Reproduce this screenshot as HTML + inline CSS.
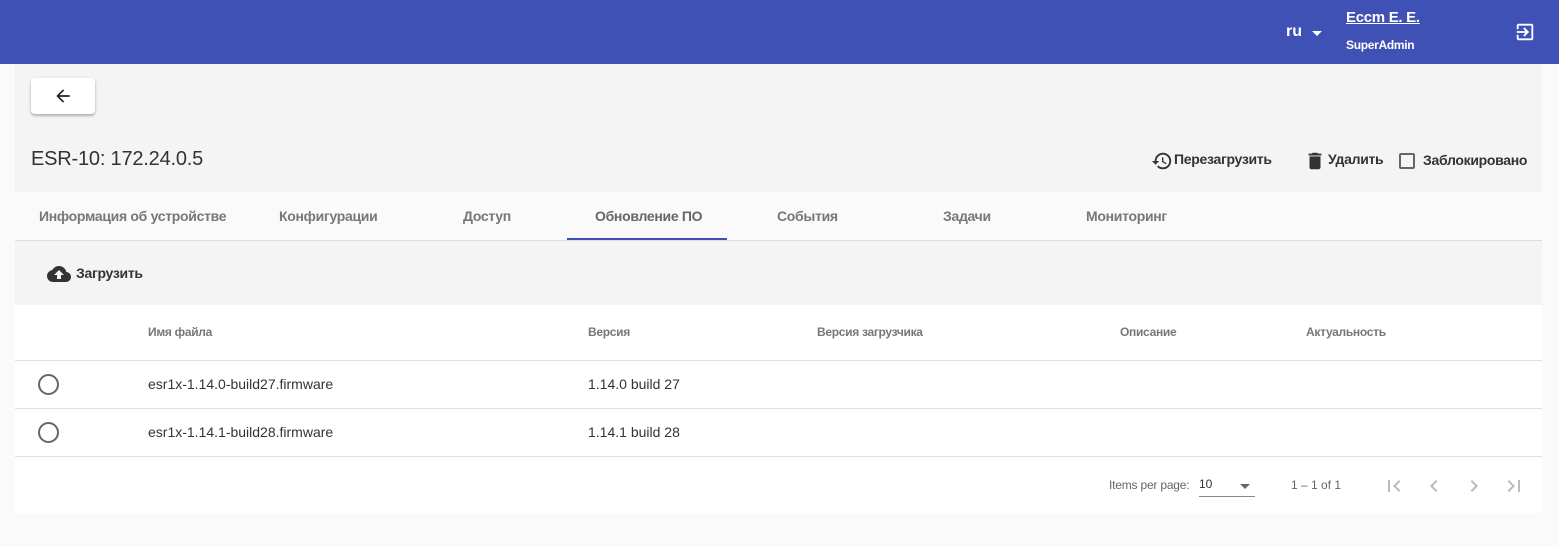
<!DOCTYPE html>
<html><head><meta charset="utf-8"><style>
*{box-sizing:border-box;margin:0;padding:0}
body{width:1559px;height:547px;background:#fafafa;font-family:"Liberation Sans",Roboto,sans-serif;position:relative;overflow:hidden;color:rgba(0,0,0,.87)}
.a{position:absolute;white-space:nowrap}
.b{font-weight:bold;letter-spacing:-0.3px}
</style></head><body>
<div class="a" style="left:0;top:0;width:1559px;height:64px;background:#3f51b5"></div>
<div class="a" style="left:1286px;top:23px;color:#fff;font-size:16px;font-weight:bold">ru</div>
<div class="a" style="left:1312px;top:31px;width:0;height:0;border-left:5px solid transparent;border-right:5px solid transparent;border-top:5px solid #fff"></div>
<div class="a b" style="left:1346px;top:9px;color:#fff;font-size:15px;text-decoration:underline">Еccm E. E.</div>
<div class="a b" style="left:1346px;top:38px;color:#fff;font-size:12px">SuperAdmin</div>
<svg class="a" style="left:1514px;top:21px" width="22" height="22" viewBox="0 0 24 24"><path fill="#fff" d="M10.09 15.59L11.5 17l5-5-5-5-1.41 1.41L12.67 11H3v2h9.67l-2.58 2.59zM19 3H5c-1.11 0-2 .9-2 2v4h2V5h14v14H5v-4H3v4c0 1.1.89 2 2 2h14c1.1 0 2-.9 2-2V5c0-1.1-.9-2-2-2z"/></svg>

<div class="a" style="left:15px;top:64px;width:1527px;height:128px;background:#f4f4f4"></div>
<div class="a" style="left:31px;top:78px;width:64px;height:36px;background:#fff;border-radius:4px;box-shadow:0 2px 2px rgba(0,0,0,.2),0 1px 4px rgba(0,0,0,.12)"></div>
<svg class="a" style="left:53px;top:86px" width="20" height="20" viewBox="0 0 24 24"><path fill="#222" d="M20 11H7.83l5.59-5.59L12 4l-8 8 8 8 1.41-1.41L7.83 13H20v-2z"/></svg>
<div class="a" style="left:31px;top:148px;font-size:20px;color:#333;letter-spacing:-0.2px">ESR-10: 172.24.0.5</div>
<svg class="a" style="left:1151px;top:150px" width="22" height="22" viewBox="0 0 24 24"><path fill="#333" d="M13 3a9 9 0 0 0-9 9H1l3.89 3.89.07.14L9 12H6c0-3.87 3.13-7 7-7s7 3.13 7 7-3.13 7-7 7c-1.93 0-3.68-.79-4.94-2.06l-1.42 1.42A8.954 8.954 0 0 0 13 21a9 9 0 0 0 0-18zm-1 5v5l4.28 2.54.72-1.21-3.5-2.08V8H12z"/></svg>
<div class="a b" style="left:1174px;top:151px;font-size:14px;color:#333">Перезагрузить</div>
<svg class="a" style="left:1304px;top:150px" width="22" height="22" viewBox="0 0 24 24"><path fill="#333" d="M6 19c0 1.1.9 2 2 2h8c1.1 0 2-.9 2-2V7H6v12zM19 4h-3.5l-1-1h-5l-1 1H5v2h14V4z"/></svg>
<div class="a b" style="left:1328px;top:151px;font-size:14px;color:#333">Удалить</div>
<div class="a" style="left:1399px;top:153px;width:16px;height:16px;border:2px solid #666;border-radius:2px"></div>
<div class="a b" style="left:1423px;top:152px;font-size:14px;color:#333">Заблокировано</div>

<div class="a" style="left:15px;top:192px;width:1527px;height:49px;background:#fafafa;border-bottom:1px solid #ddd"></div>
<div class="a b" style="left:39px;top:208px;font-size:14px;color:#777">Информация об устройстве</div>
<div class="a b" style="left:279px;top:208px;font-size:14px;color:#777">Конфигурации</div>
<div class="a b" style="left:463px;top:208px;font-size:14px;color:#777">Доступ</div>
<div class="a b" style="left:595px;top:208px;font-size:14px;color:#666">Обновление ПО</div>
<div class="a" style="left:567px;top:238px;width:160px;height:2px;background:#3f51b5"></div>
<div class="a b" style="left:777px;top:208px;font-size:14px;color:#777">События</div>
<div class="a b" style="left:943px;top:208px;font-size:14px;color:#777">Задачи</div>
<div class="a b" style="left:1086px;top:208px;font-size:14px;color:#777">Мониторинг</div>

<div class="a" style="left:15px;top:241px;width:1527px;height:64px;background:#f4f4f4"></div>
<svg class="a" style="left:46px;top:262px" width="26" height="24" viewBox="0 0 24 24"><path fill="#333" d="M19.35 10.04A7.49 7.49 0 0 0 12 4C9.11 4 6.6 5.64 5.35 8.04A5.994 5.994 0 0 0 0 14c0 3.31 2.69 6 6 6h13c2.76 0 5-2.24 5-5 0-2.64-2.05-4.78-4.65-4.96zM14 13v4h-4v-4H7l5-5 5 5h-3z"/></svg>
<div class="a b" style="left:76px;top:265px;font-size:14px;color:#333">Загрузить</div>

<div class="a" style="left:15px;top:305px;width:1527px;height:208px;background:#fff"></div>
<div class="a b" style="left:148px;top:325px;font-size:12px;color:#777">Имя файла</div>
<div class="a b" style="left:588px;top:325px;font-size:12px;color:#777">Версия</div>
<div class="a b" style="left:817px;top:325px;font-size:12px;color:#777">Версия загрузчика</div>
<div class="a b" style="left:1120px;top:325px;font-size:12px;color:#777">Описание</div>
<div class="a b" style="left:1306px;top:325px;font-size:12px;color:#777">Актуальность</div>
<div class="a" style="left:15px;top:360px;width:1527px;height:1px;background:#e0e0e0"></div>
<div class="a" style="left:38px;top:374px;width:21px;height:21px;border:2px solid #666;border-radius:50%"></div>
<div class="a" style="left:148px;top:376px;font-size:14px;color:#333">esr1x-1.14.0-build27.firmware</div>
<div class="a" style="left:588px;top:376px;font-size:14px;color:#333">1.14.0 build 27</div>
<div class="a" style="left:15px;top:408px;width:1527px;height:1px;background:#e0e0e0"></div>
<div class="a" style="left:38px;top:422px;width:21px;height:21px;border:2px solid #666;border-radius:50%"></div>
<div class="a" style="left:148px;top:424px;font-size:14px;color:#333">esr1x-1.14.1-build28.firmware</div>
<div class="a" style="left:588px;top:424px;font-size:14px;color:#333">1.14.1 build 28</div>
<div class="a" style="left:15px;top:456px;width:1527px;height:1px;background:#e0e0e0"></div>

<div class="a" style="left:1109px;top:478px;font-size:12px;color:#666;letter-spacing:-0.2px">Items per page:</div>
<div class="a" style="left:1199px;top:477px;font-size:12px;color:#333">10</div>
<div class="a" style="left:1240px;top:484px;width:0;height:0;border-left:5px solid transparent;border-right:5px solid transparent;border-top:5px solid #666"></div>
<div class="a" style="left:1199px;top:496px;width:56px;height:1px;background:#888"></div>
<div class="a" style="left:1291px;top:478px;font-size:12px;color:#666">1 – 1 of 1</div>
<svg class="a" style="left:1382px;top:474px" width="24" height="24" viewBox="0 0 24 24"><path fill="#bbb" d="M18.41 16.59L13.82 12l4.59-4.59L17 6l-6 6 6 6zM6 6h2v12H6z"/></svg>
<svg class="a" style="left:1422px;top:474px" width="24" height="24" viewBox="0 0 24 24"><path fill="#bbb" d="M15.41 7.41L14 6l-6 6 6 6 1.41-1.41L10.83 12z"/></svg>
<svg class="a" style="left:1462px;top:474px" width="24" height="24" viewBox="0 0 24 24"><path fill="#bbb" d="M10 6L8.59 7.41 13.17 12l-4.58 4.59L10 18l6-6z"/></svg>
<svg class="a" style="left:1502px;top:474px" width="24" height="24" viewBox="0 0 24 24"><path fill="#bbb" d="M5.59 7.41L10.18 12l-4.59 4.59L7 18l6-6-6-6zM16 6h2v12h-2z"/></svg>
</body></html>
